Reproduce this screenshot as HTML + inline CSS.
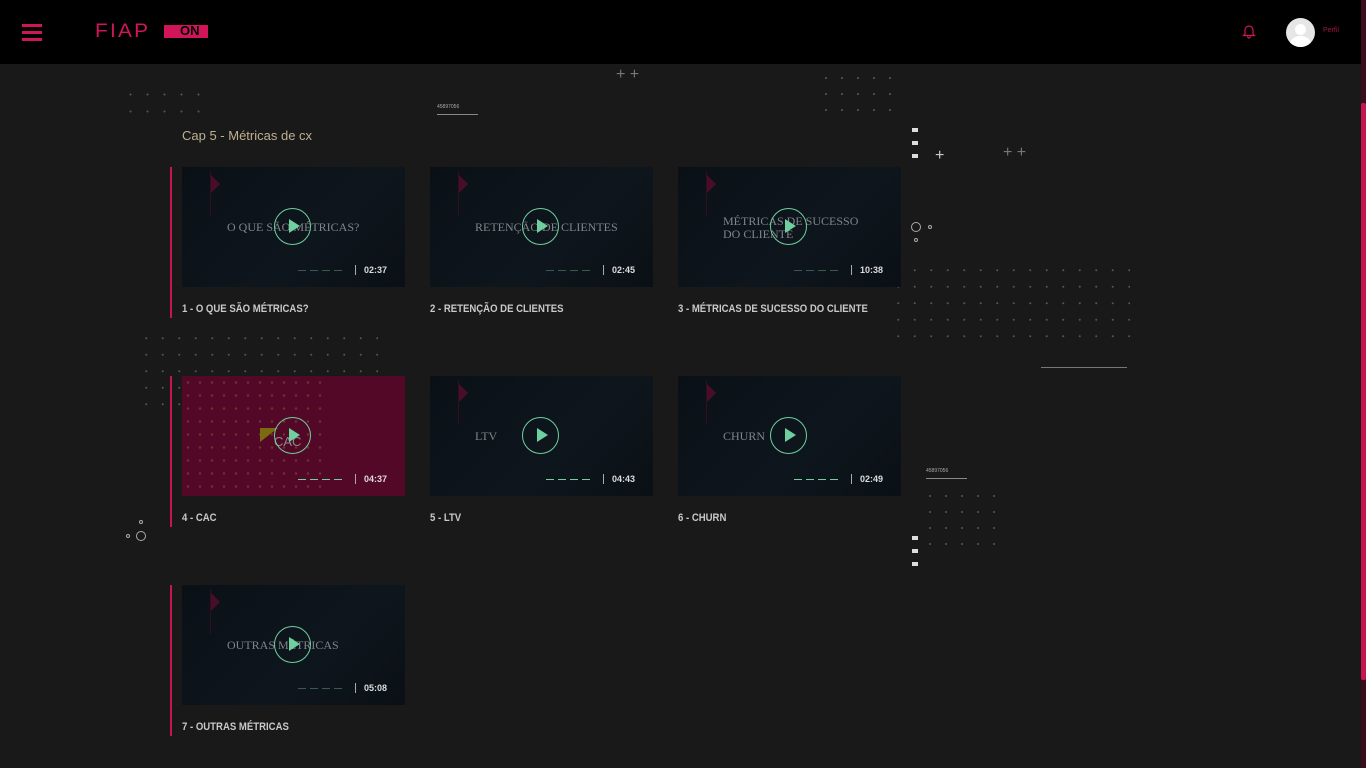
<!DOCTYPE html>
<html><head><meta charset="utf-8"><style>
*{margin:0;padding:0;box-sizing:border-box}
body{width:1366px;height:768px;background:#191919;overflow:hidden;position:relative;font-family:"Liberation Sans",sans-serif}
.hdr{position:absolute;left:0;top:0;width:1366px;height:64px;background:#000}
.ham{position:absolute;left:22px;top:24px;width:20px}
.ham i{display:block;height:3px;background:#d0155a;margin-bottom:4px}
.sb{position:absolute;right:0;top:0;width:5px;height:768px;background:#3a0d1e}
.sbt{position:absolute;right:0;top:103px;width:5px;height:577px;background:#c8154f;border-radius:2px}
.dots{position:absolute;background-image:radial-gradient(circle,#555 0.8px,transparent 1.2px)}
.card{position:absolute;width:223px;height:120px;background:linear-gradient(135deg,#0a1016,#0e161d 60%,#0a1015);overflow:hidden}
.bar{position:absolute;width:2px;background:#c8154f}
.ct{position:absolute;font-family:"Liberation Serif",serif;font-size:12px;color:#7f858a;line-height:13px}
.play{position:absolute;width:37px;height:37px;border:1.5px solid #6fcf9f;border-radius:50%}
.play:after{content:"";position:absolute;left:14px;top:10px;border-left:11px solid #6fcf9f;border-top:7px solid transparent;border-bottom:7px solid transparent}
.dash{position:absolute;left:116px;top:103px;width:46px;height:1px;background:repeating-linear-gradient(90deg,#3a5a4c 0 8px,transparent 8px 12px)}
.sep{position:absolute;left:173px;top:98px;width:1px;height:10px;background:#aaa}
.dur{position:absolute;left:182px;top:98px;font-size:9px;font-weight:bold;color:#ddd}
.tri{position:absolute;left:29px;top:8px;border-left:9px solid #4a0d28;border-top:9px solid transparent;border-bottom:9px solid transparent}
.vl{position:absolute;left:28px;top:4px;width:1px;height:45px;background:#2e1020}
.lbl{position:absolute;font-size:11px;font-weight:bold;color:#c9c9c9;transform:scaleX(0.87);transform-origin:left;white-space:nowrap}
.wh{position:absolute;width:6px;height:4px;background:#ddd}
.plus{position:absolute;color:#777;font-size:16px;line-height:16px}
</style></head><body>
<div class="hdr">
<div class="ham"><i></i><i></i><i></i></div>
<div style="position:absolute;left:95px;top:23px;font-size:19px;letter-spacing:2px;color:#d0155a;font-weight:300;line-height:18px;transform:scaleX(1.1);transform-origin:left">FIAP</div>
<div style="position:absolute;left:164px;top:25px;width:44px;height:13px;background:#d0155a;"><span style="position:absolute;left:16px;top:-1px;font-size:13px;font-weight:bold;color:#000;line-height:14px">ON</span></div>
<svg style="position:absolute;left:1242px;top:24px" width="14" height="15" viewBox="0 0 14 15"><path d="M3 10V6a4 4 0 0 1 8 0v4l1.5 1.5h-11z M5.5 12.5a1.5 1.5 0 0 0 3 0" fill="none" stroke="#d0155a" stroke-width="1.2"/></svg>
<div style="position:absolute;left:1286px;top:18px;width:29px;height:29px;border-radius:50%;background:#e6e6e6;overflow:hidden"><div style="position:absolute;left:9px;top:6px;width:11px;height:11px;border-radius:50%;background:#fff"></div><div style="position:absolute;left:4px;top:18px;width:21px;height:16px;border-radius:50%;background:#fff"></div></div>
<div style="position:absolute;left:1323px;top:27px;font-size:7px;color:#a0124a">Perfil</div>
</div>
<div class="sb"></div><div class="sbt"></div>

<div class="dots" style="left:122px;top:86px;width:82px;height:30px;background-size:17px 17px"></div>
<div class="dots" style="left:818px;top:70px;width:80px;height:42px;background-size:16px 16px"></div>
<div class="dots" style="left:890px;top:262px;width:240px;height:84px;background-size:16.5px 16.5px"></div>
<div class="dots" style="left:138px;top:330px;width:240px;height:80px;background-size:16.5px 16.5px"></div>
<div class="dots" style="left:922px;top:488px;width:80px;height:70px;background-size:16px 16px"></div>
<div class="plus" style="left:616px;top:67px">+ +</div>
<div class="plus" style="left:1003px;top:145px">+ +</div>
<div class="plus" style="left:935px;top:148px;color:#ccc">+</div>
<div class="wh" style="left:912px;top:128px"></div><div class="wh" style="left:912px;top:141px"></div><div class="wh" style="left:912px;top:154px"></div>
<div class="wh" style="left:912px;top:536px"></div><div class="wh" style="left:912px;top:549px"></div><div class="wh" style="left:912px;top:562px"></div>
<div style="position:absolute;left:911px;top:222px;width:10px;height:10px;border:1px solid #aaa;border-radius:50%"></div>
<div style="position:absolute;left:928px;top:225px;width:4px;height:4px;border:1px solid #aaa;border-radius:50%"></div>
<div style="position:absolute;left:914px;top:238px;width:4px;height:4px;border:1px solid #aaa;border-radius:50%"></div>
<div style="position:absolute;left:136px;top:531px;width:10px;height:10px;border:1px solid #aaa;border-radius:50%"></div>
<div style="position:absolute;left:126px;top:534px;width:4px;height:4px;border:1px solid #aaa;border-radius:50%"></div>
<div style="position:absolute;left:139px;top:520px;width:4px;height:4px;border:1px solid #aaa;border-radius:50%"></div>
<div style="position:absolute;left:437px;top:104px;font-size:5px;color:#aaa">45897056</div>
<div style="position:absolute;left:437px;top:114px;width:41px;height:1px;background:#888"></div>
<div style="position:absolute;left:926px;top:468px;font-size:5px;color:#aaa">45897056</div>
<div style="position:absolute;left:926px;top:478px;width:41px;height:1px;background:#888"></div>
<div style="position:absolute;left:1041px;top:367px;width:86px;height:1px;background:#777"></div>

<div style="position:absolute;left:182px;top:128px;font-size:13px;color:#bfb08f">Cap 5 - Métricas de cx</div>

<div class="bar" style="left:170px;top:167px;height:151px"></div>
<div class="bar" style="left:170px;top:376px;height:151px"></div>
<div class="bar" style="left:170px;top:585px;height:151px"></div>

<div class="card" style="left:182px;top:167px"><div class="vl"></div><div class="tri"></div><div class="ct" style="left:45px;top:54px">O QUE SÃO MÉTRICAS?</div><div class="play" style="left:92px;top:41px"></div><div class="dash"></div><div class="sep"></div><div class="dur">02:37</div></div>
<div class="lbl" style="left:182px;top:303px">1 - O QUE SÃO MÉTRICAS?</div>
<div class="card" style="left:430px;top:167px"><div class="vl"></div><div class="tri"></div><div class="ct" style="left:45px;top:54px">RETENÇÃO DE CLIENTES</div><div class="play" style="left:92px;top:41px"></div><div class="dash"></div><div class="sep"></div><div class="dur">02:45</div></div>
<div class="lbl" style="left:430px;top:303px">2 - RETENÇÃO DE CLIENTES</div>
<div class="card" style="left:678px;top:167px"><div class="vl"></div><div class="tri"></div><div class="ct" style="left:45px;top:48px">MÉTRICAS DE SUCESSO<br>DO CLIENTE</div><div class="play" style="left:92px;top:41px"></div><div class="dash"></div><div class="sep"></div><div class="dur">10:38</div></div>
<div class="lbl" style="left:678px;top:303px">3 - MÉTRICAS DE SUCESSO DO CLIENTE</div>

<div class="card" style="left:182px;top:376px;background:#520826"><div style="position:absolute;left:0;top:0;width:140px;height:120px;background-image:radial-gradient(circle,#8a6a3a 1px,transparent 1.5px);background-size:12px 13px;opacity:.45"></div><div style="position:absolute;left:78px;top:52px;border-left:18px solid #7a6a10;border-bottom:14px solid transparent"></div><div class="ct" style="left:92px;top:59px;font-family:'Liberation Sans',sans-serif;font-size:13px;color:#8a8a8a">CAC</div><div class="play" style="left:92px;top:41px"></div><div class="dash" style="background:repeating-linear-gradient(90deg,#6fcf9f 0 8px,transparent 8px 12px)"></div><div class="sep"></div><div class="dur">04:37</div></div>
<div class="lbl" style="left:182px;top:512px">4 - CAC</div>
<div class="card" style="left:430px;top:376px"><div class="vl"></div><div class="tri"></div><div class="ct" style="left:45px;top:54px">LTV</div><div class="play" style="left:92px;top:41px"></div><div class="dash" style="background:repeating-linear-gradient(90deg,#6fcf9f 0 8px,transparent 8px 12px)"></div><div class="sep"></div><div class="dur">04:43</div></div>
<div class="lbl" style="left:430px;top:512px">5 - LTV</div>
<div class="card" style="left:678px;top:376px"><div class="vl"></div><div class="tri"></div><div class="ct" style="left:45px;top:54px">CHURN</div><div class="play" style="left:92px;top:41px"></div><div class="dash" style="background:repeating-linear-gradient(90deg,#6fcf9f 0 8px,transparent 8px 12px)"></div><div class="sep"></div><div class="dur">02:49</div></div>
<div class="lbl" style="left:678px;top:512px">6 - CHURN</div>

<div class="card" style="left:182px;top:585px"><div class="vl"></div><div class="tri"></div><div class="ct" style="left:45px;top:54px">OUTRAS MÉTRICAS</div><div class="play" style="left:92px;top:41px"></div><div class="dash"></div><div class="sep"></div><div class="dur">05:08</div></div>
<div class="lbl" style="left:182px;top:721px">7 - OUTRAS MÉTRICAS</div>
</body></html>
